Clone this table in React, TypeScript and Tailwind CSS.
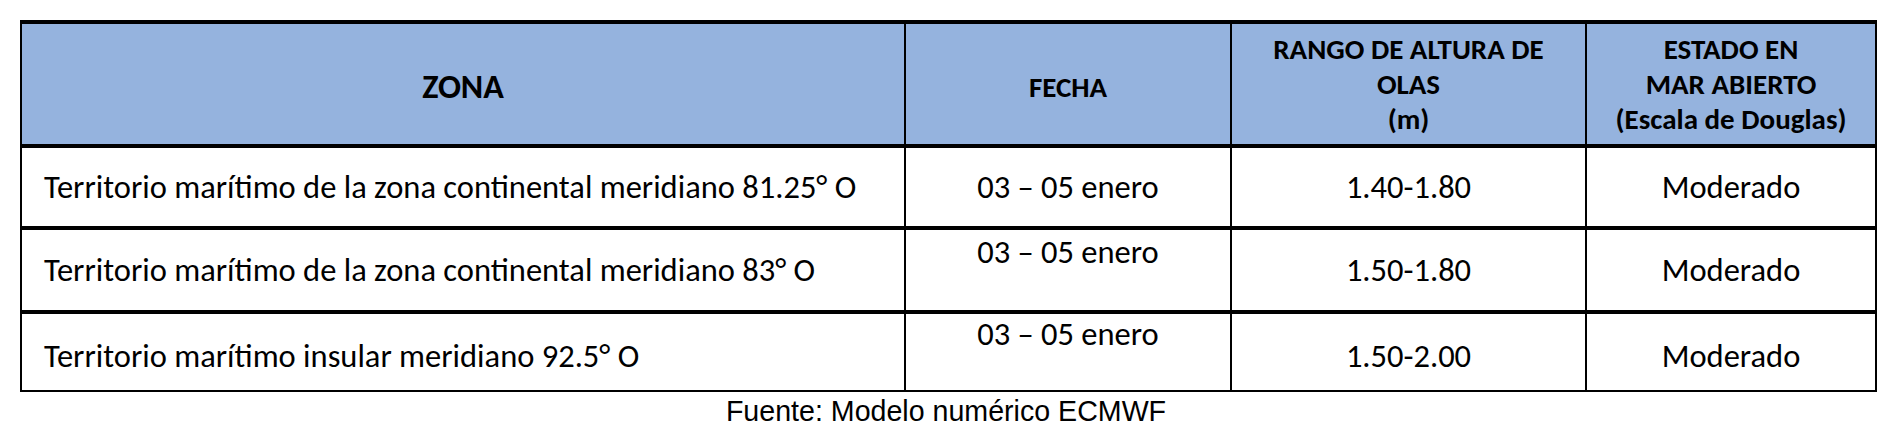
import React from "react";

const body = "font-['Carlito','Lato',sans-serif] text-black";

type Row = {
  zona: string;
  fecha: string;
  rango: string;
  estado: string;
  h: string;
  datePad: string;
  valPad: string;
  last?: boolean;
};

const rows: Row[] = [
  { zona: "Territorio marítimo de la zona continental meridiano 81.25° O", fecha: "03 – 05 enero", rango: "1.40-1.80", estado: "Moderado", h: "h-[78px]", datePad: "items-center", valPad: "" },
  { zona: "Territorio marítimo de la zona continental meridiano 83° O", fecha: "03 – 05 enero", rango: "1.50-1.80", estado: "Moderado", h: "h-[80px]", datePad: "items-start pt-[2px]", valPad: "pt-[0px]" },
  { zona: "Territorio marítimo insular meridiano 92.5° O", fecha: "03 – 05 enero", rango: "1.50-2.00", estado: "Moderado", h: "h-[76px]", datePad: "items-start pt-[0px]", valPad: "pt-[8px]", last: true },
];

export default function App() {
  return (
    <div className="w-[1892px] h-[438px] bg-white pt-[20px] overflow-hidden">
      <div className={`ml-[20px] w-[1857px] border-t-4 border-x-2 border-b-2 border-black ${body}`}>
        <div className="grid grid-cols-[882px_326px_355px_290px] h-[124px] border-b-4 border-black bg-[#95b3de] font-bold">
          <div className="flex items-center justify-center text-[34px] leading-[40px] pt-[6px]">ZONA</div>
          <div className="flex items-center justify-center border-l-2 border-black text-[29px] leading-[35px] pt-[6px]">FECHA</div>
          <div className="flex flex-col items-center justify-center border-l-2 border-black text-[29px] leading-[35px] text-center">
            <span>RANGO DE ALTURA DE</span>
            <span>OLAS</span>
            <span>(m)</span>
          </div>
          <div className="flex flex-col items-center justify-center border-l-2 border-black text-[29px] leading-[35px] text-center">
            <span>ESTADO EN</span>
            <span>MAR ABIERTO</span>
            <span>(Escala de Douglas)</span>
          </div>
        </div>
        {rows.map((r, i) => (
          <div
            key={i}
            className={`grid grid-cols-[882px_326px_355px_290px] ${r.h} ${r.last ? "" : "box-content border-b-4 border-black"} text-[32.5px] leading-[40px]`}
          >
            <div className={`flex items-center pl-[22px] whitespace-nowrap ${r.valPad}`}>{r.zona}</div>
            <div className={`flex justify-center border-l-2 border-black ${r.datePad}`}>{r.fecha}</div>
            <div className={`flex items-center justify-center border-l-2 border-black ${r.valPad}`}>{r.rango}</div>
            <div className={`flex items-center justify-center border-l-2 border-black ${r.valPad}`}>{r.estado}</div>
          </div>
        ))}
      </div>
      <div className="mt-[3px] w-[1892px] text-center font-['Liberation_Sans',Arial,sans-serif] text-[28.6px] leading-[33px] text-black">
        Fuente: Modelo numérico ECMWF
      </div>
    </div>
  );
}
